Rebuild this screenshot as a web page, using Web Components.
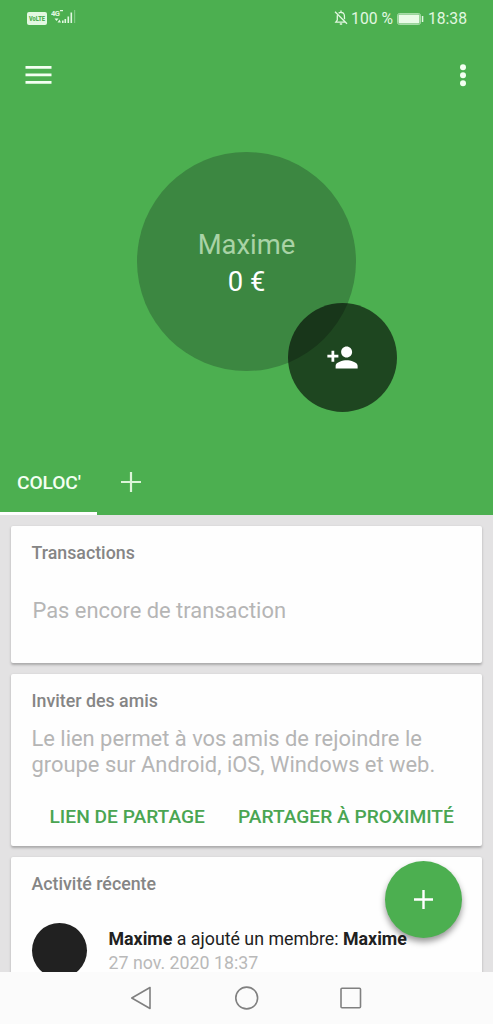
<!DOCTYPE html>
<html lang="fr">
<head>
<meta charset="utf-8">
<title>Coloc'</title>
<style>
html,body{margin:0;height:100%;overflow:hidden}
body{font-family:Roboto,"Liberation Sans",sans-serif;background:#fbfbfb}
</style>
</head>
<body>
<group-app></group-app>
<script>
function define(name, html) {
  const t = document.createElement('template');
  t.innerHTML = html;
  customElements.define(name, class extends HTMLElement {
    constructor() {
      super();
      this.attachShadow({mode: 'open'}).append(t.content.cloneNode(true));
    }
  });
}

define('status-bar', `
<style>
:host{display:flex;align-items:center;height:36px;padding:0 26px;color:#e2f8e1;font-size:15.7px;line-height:20px;box-sizing:border-box}
svg{display:block}
.signal{margin:-2px 0 0 4px}
.lte{margin:0 0 0 1px}
.right{margin-left:auto;display:flex;align-items:center;padding-top:2px}
.bell{margin:-2px 3px 0 0}
.bat{margin:-1px 4px 0 4px}
</style>
<svg class="lte" width="20" height="13" viewBox="0 0 20 13"><rect width="20" height="13" rx="2" fill="#e2f8e1"/><text x="2" y="9.300" font-size="7.500" font-weight="900" fill="#4caf50" textLength="16" lengthAdjust="spacingAndGlyphs">VoLTE</text></svg>
<svg class="signal" width="27" height="18" viewBox="0 0 27 18" fill="#e2f8e1"><text x="0" y="7.500" font-size="7.500" font-weight="700" letter-spacing="-.5">4G</text><path d="M9 2h3v1.200H9zM3.500 10.500h4l-2 2.500zM6.500 14.500l2-3 1.500 3zM11 12.500h1.600V15H11zM13.500 11h1.600v4h-1.600zM16.500 8.500h1.600V15h-1.600zM19.500 4.500h1.600V15h-1.600z"/><path opacity=".35" d="M23 2h1.200v13H23z"/></svg>
<div class="right">
<svg class="bell" width="14" height="16" viewBox="0 0 14 16" fill="none" stroke="#e2f8e1" stroke-width="1.300"><path d="M1 1.800l12 12M3.300 5.300V10L1.800 12.200H11M4.600 3.300C6 2 9 2.200 10 4c.6 1 .5 4 .5 5.200M7 .6v1.600M5.800 14h2.400"/></svg>
<span>100 %</span>
<svg class="bat" width="27" height="12" viewBox="0 0 27 12"><rect x=".5" y=".5" width="23" height="11" rx="2" fill="none" stroke="#e2f8e1" stroke-opacity=".6"/><rect x="1.500" y="1.500" width="21" height="9" rx="1" fill="#e9fbe7"/><path d="M24.800 3h1.500v6h-1.500z" fill="#e2f8e1"/></svg>
<span>18:38</span>
</div>`);

define('app-bar', `
<style>:host{display:flex;justify-content:space-between;align-items:center;height:78px;padding:0 26px 0 25px;box-sizing:border-box}svg{display:block}</style>
<svg width="27" height="20" viewBox="0 0 27 20" fill="#f3fff2"><path d="M.5 1h26v2.700H.5zM.5 8.600h26v2.700H.5zM.5 16.100h26v2.700H.5z"/></svg>
<svg width="8" height="24" viewBox="0 0 8 24" fill="#f3fff2"><circle cx="4" cy="4.200" r="3"/><circle cx="4" cy="12.200" r="3"/><circle cx="4" cy="20.200" r="3"/></svg>`);

define('member-balance', `
<style>
:host{display:flex;flex-direction:column;align-items:center;justify-content:center;position:relative;width:219px;height:219px;padding-top:5px;box-sizing:border-box;border-radius:50%;background:#3c8741;font-size:27.4px;line-height:37px;color:#fff}
.name{color:#a9d3a6}
.add{position:absolute;left:151px;top:151px;width:109px;height:109px;border-radius:50%;background:rgba(0,0,0,.6);display:flex;align-items:center;justify-content:center}
</style>
<div class="name"><slot name="name"></slot></div><div><slot name="amount"></slot></div>
<div class="add"><svg width="33" height="33" viewBox="0 0 24 24" fill="#fff"><path d="M15 12c2.210 0 4-1.790 4-4s-1.790-4-4-4-4 1.790-4 4 1.790 4 4 4zm-9-2V7H4v3H1v2h3v3h2v-3h3v-2H6zm9 4c-2.670 0-8 1.340-8 4v2h16v-2c0-2.660-5.330-4-8-4z"/></svg></div>`);

define('group-tabs', `
<style>
:host{display:flex;height:66px;color:#f3fff2;font-size:19.200px;font-weight:500;line-height:68px}
.tab{width:97px;box-sizing:border-box;height:66px;padding-left:17px;border-bottom:3px solid #fff;letter-spacing:-.1px;white-space:nowrap}
.plus{width:68px;display:flex;align-items:center;justify-content:center}
</style>
<div class="tab"><slot></slot></div>
<div class="plus"><svg width="20" height="20" viewBox="0 0 20 20" fill="#dcf5d9"><path d="M8.900 0h2.200v8.900H20v2.200h-8.900V20H8.900v-8.900H0V8.900h8.900z"/></svg></div>`);

define('info-card', `
<style>
:host{display:block;box-sizing:border-box;background:#fefefe;border-radius:2px;box-shadow:0 1.500px 2.500px rgba(0,0,0,.25);padding:15px 20.500px 0}
h2{margin:0;font-size:17.800px;line-height:24px;font-weight:500;color:#858585}
</style>
<h2><slot name="title"></slot></h2><slot></slot>`);

define('text-button', `
<style>:host{display:block;font-size:19.200px;line-height:24px;font-weight:500;color:#4aa552;white-space:nowrap}</style><slot></slot>`);

define('activity-row', `
<style>
:host{display:flex;align-items:flex-start;padding-top:27px;font-size:17.800px;line-height:24px;color:#212121}
.avatar{width:55px;height:55px;border-radius:50%;background:#212121;margin-right:22px;flex:none}
.text{padding-top:4px;white-space:nowrap}
.date{color:#b9b9b9;line-height:18px;padding-top:3px}
</style>
<div class="avatar"></div><div class="text"><div class="what"><slot></slot></div><div class="date"><slot name="date"></slot></div></div>`);

define('add-button', `
<style>:host{display:flex;align-items:center;justify-content:center;border-radius:50%;background:#4caf50;box-shadow:0 4px 6px rgba(0,0,0,.4)}</style>
<svg width="20" height="20" viewBox="0 0 20 20" fill="#fff"><path d="M8.300 0h2.400v8.300H19v2.400h-8.300V19H8.300v-8.300H0V8.300h8.300z"/></svg>`);

define('nav-bar', `
<style>:host{display:flex;justify-content:center;align-items:center;gap:80px;height:52px;background:#fbfbfb}svg{display:block}</style>
<svg width="24" height="24" viewBox="0 0 24 24" fill="none" stroke="#808080" stroke-width="1.600" stroke-linejoin="round"><path d="M19 1.500v21L.8 12z"/></svg>
<svg width="24" height="24" viewBox="0 0 24 24" fill="none" stroke="#808080" stroke-width="1.600"><circle cx="11.700" cy="12" r="10.900"/></svg>
<svg width="24" height="24" viewBox="0 0 24 24" fill="none" stroke="#808080" stroke-width="1.600"><rect x="2" y="2.300" width="19.500" height="19.500" rx="1"/></svg>`);

define('group-app', `
<style>
:host{display:flex;flex-direction:column;position:relative;width:493px;height:1024px;overflow:hidden}
header{display:flex;flex-direction:column;height:515px;background:#4caf50;flex:none}
.hero{flex:1;display:flex;justify-content:center;padding-top:38px}
main{flex:1;min-height:0;overflow:hidden;background:#e3e2e3;padding:11px 11px 0;display:flex;flex-direction:column;gap:11px;box-sizing:border-box}
info-card{flex:none}
.c1{height:137px}.c2{height:172px}.c3{height:150px}
p{margin:0;color:#b5b5b5;font-size:21.900px;line-height:26px;white-space:nowrap}
.empty{padding:33px 0 0 1px}
.invite{padding-top:13px}
.actions{display:flex;gap:33px;padding:27px 0 0 18px}
add-button{position:absolute;left:385px;top:861px;width:77px;height:77px}
b{font-weight:700}
</style>
<header>
<status-bar></status-bar><app-bar></app-bar>
<div class="hero"><member-balance><span slot="name">Maxime</span><span slot="amount">0 €</span></member-balance></div>
<group-tabs>COLOC'</group-tabs>
</header>
<main>
<info-card class="c1"><span slot="title">Transactions</span><p class="empty">Pas encore de transaction</p></info-card>
<info-card class="c2"><span slot="title">Inviter des amis</span><p class="invite">Le lien permet à vos amis de rejoindre le<br>groupe sur Android, iOS, Windows et web.</p>
<div class="actions"><text-button>LIEN DE PARTAGE</text-button><text-button>PARTAGER À PROXIMITÉ</text-button></div></info-card>
<info-card class="c3"><span slot="title">Activité récente</span><activity-row><b>Maxime</b> a ajouté un membre: <b>Maxime</b><span slot="date">27 nov. 2020 18:37</span></activity-row></info-card>
</main>
<nav-bar></nav-bar>
<add-button></add-button>`);
</script>
</body>
</html>
